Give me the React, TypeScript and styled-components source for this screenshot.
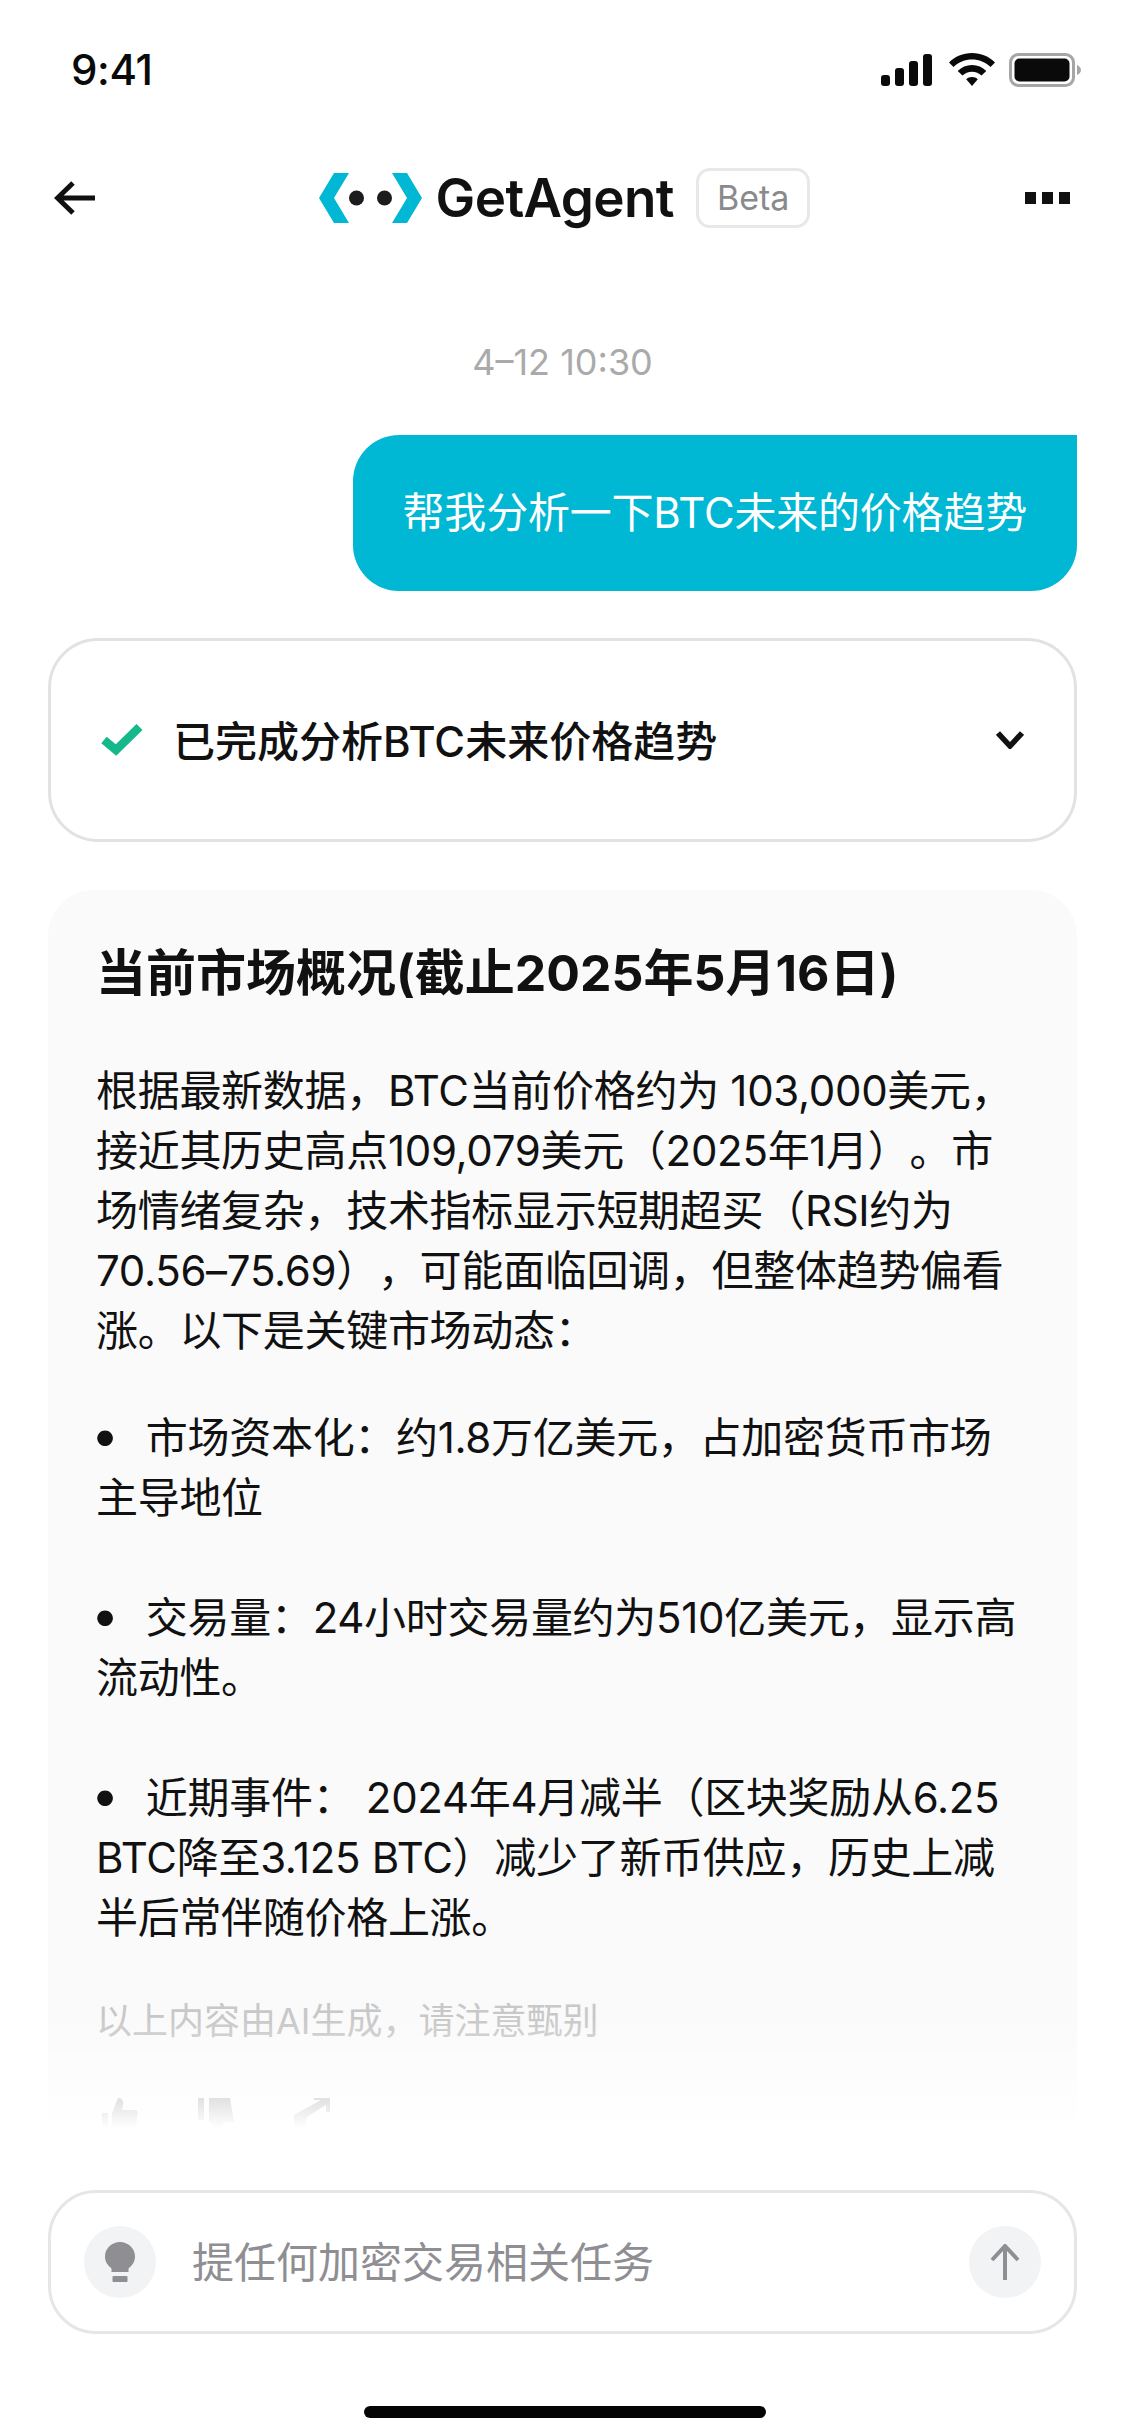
import React from "react";
import styled, { createGlobalStyle } from "styled-components";

const Global = createGlobalStyle`
  html, body { margin: 0; padding: 0; background: #fff; }
  body {
    font-family: "Inter", "Noto Sans CJK SC", sans-serif;
    text-spacing-trim: space-all;
  }
`;

const Screen = styled.div`
  width: 1125px;
  height: 2436px;
  background: #fff;
  display: flex;
  flex-direction: column;
  overflow: hidden;
  position: relative;
`;

const StatusBar = styled.div`
  height: 140px;
  padding: 0 44px 0 71px;
  box-sizing: border-box;
  display: flex;
  align-items: center;
  justify-content: space-between;
  color: #0a0a0a;
`;

const Time = styled.span`
  font-size: 42px;
  font-weight: 500;
  letter-spacing: -0.4px;
  padding-bottom: 2px;
`;

const StatusIcons = styled.div`
  display: flex;
  align-items: center;
  gap: 14px;
`;

const NavBar = styled.div`
  height: 116px;
  padding: 0 54px;
  display: flex;
  align-items: center;
  justify-content: space-between;
`;

const Brand = styled.div`
  display: flex;
  align-items: center;
  margin-left: 8px;
`;

const BrandName = styled.span`
  font-size: 53px;
  font-weight: 600;
  letter-spacing: -0.6px;
  color: #111;
  margin-left: 13px;
`;

const BetaTag = styled.span`
  margin-left: 22px;
  font-size: 34px;
  line-height: 42px;
  color: #8a8a8e;
  border: 3px solid #e8e8e8;
  border-radius: 14px;
  padding: 6px 18px;
`;

const Stamp = styled.div`
  margin-top: 84px;
  text-align: center;
  font-size: 36px;
  color: #aaa;
  line-height: 44px;
`;

const UserRow = styled.div`
  display: flex;
  justify-content: flex-end;
  padding: 0 48px;
  margin-top: 51px;
`;

const UserBubble = styled.div`
  height: 156px;
  box-sizing: border-box;
  padding: 0 50px 8px;
  display: flex;
  align-items: center;
  background: #00b8d4;
  color: #fff;
  font-size: 42px;
  letter-spacing: -0.2px;
  border-radius: 46px 0 46px 46px;
`;

const TaskCard = styled.div`
  margin: 47px 48px 0;
  height: 204px;
  box-sizing: border-box;
  border: 3px solid #e2e2e2;
  border-radius: 50px;
  display: flex;
  align-items: center;
  padding: 0 50px;
  gap: 30px;
  font-size: 42px;
  font-weight: 500;
  color: #111;
`;

const TaskTitle = styled.span`
  flex: 1;
  padding-bottom: 3px;
`;

const Answer = styled.div`
  margin: 48px 48px 0;
  height: 1238px;
  padding: 53px 48px 0;
  box-sizing: border-box;
  border-radius: 46px 46px 0 0;
  background: #fafafb;
  position: relative;
  overflow: hidden;
  color: #111;
  font-size: 42px;
  line-height: 60px;
  letter-spacing: -0.3px;
`;

const AnswerTitle = styled.div`
  font-size: 50px;
  font-weight: 700;
  line-height: 60px;
  letter-spacing: 0;
  margin-bottom: 58px;
`;

const Para = styled.p<{ $gap: number }>`
  margin: 0 0 ${(p) => p.$gap}px;
`;

const BulletPara = styled(Para)`
  &::before {
    content: "•";
    font-size: 50px;
    line-height: 0;
    margin: 0 27px 0 -5px;
  }
`;

const Disclaimer = styled.div`
  font-size: 36px;
  line-height: 44px;
  letter-spacing: 0;
  color: #c8c8c8;
  margin-top: -9px;
`;

const Actions = styled.div`
  display: flex;
  gap: 60px;
  margin: 55px 0 0 6px;
  color: #8e8e93;
`;

const Fade = styled.div`
  position: absolute;
  left: 0;
  right: 0;
  bottom: 0;
  height: 110px;
  background: linear-gradient(to bottom, rgba(255, 255, 255, 0), #fff);
`;

const Composer = styled.div`
  position: absolute;
  left: 48px;
  right: 48px;
  top: 2190px;
  height: 144px;
  box-sizing: border-box;
  border: 3px solid #e6e6e6;
  border-radius: 48px;
  display: flex;
  align-items: center;
  padding: 0 33px;
  gap: 36px;
  background: #fff;
`;

const RoundButton = styled.div`
  width: 72px;
  height: 72px;
  border-radius: 50%;
  background: #f2f3f5;
  display: flex;
  align-items: center;
  justify-content: center;
  flex: none;
`;

const Placeholder = styled.span`
  flex: 1;
  font-size: 42px;
  color: #8e8e93;
  padding-bottom: 5px;
`;

const HomeBar = styled.div`
  position: absolute;
  left: 364px;
  top: 2406px;
  width: 402px;
  height: 12px;
  border-radius: 6px;
  background: #050505;
`;

const Logo = () => (
  <svg width="104" height="50" viewBox="0 0 104 50">
    <path d="M0 25 L15 0 H30 L15 25 L30 50 H15Z M103 25 L88 0 H73 L88 25 L73 50 H88Z" fill="#00b8d4" />
    <circle cx="37.500" cy="25" r="7.500" fill="#1c1c1e" />
    <circle cx="65.500" cy="25" r="7.500" fill="#1c1c1e" />
  </svg>
);

const Icons = {
  Signal: () => (
    <svg width="54" height="32" viewBox="0 0 54 32" fill="#0a0a0a">
      <rect x="0" y="21" width="9" height="11" rx="3" />
      <rect x="14" y="14" width="9" height="18" rx="3" />
      <rect x="28" y="7" width="9" height="25" rx="3" />
      <rect x="42" y="0" width="9" height="32" rx="3" />
    </svg>
  ),
  Wifi: () => (
    <svg width="46" height="34" viewBox="0 0 46 34" fill="#0a0a0a">
      <path d="M23 0C14 0 6 3.500 0 9.500L4.500 14C9.500 9 16 6.500 23 6.500S36.500 9 41.500 14L46 9.500C40 3.500 32 0 23 0Z" />
      <path d="M23 12C17.500 12 12.500 14.200 8.700 18L13.500 22.500C16 20 19.300 18.700 23 18.700S30 20 32.500 22.500L37.300 18C33.500 14.200 28.500 12 23 12Z" />
      <path d="M23 24C20.700 24 18.700 24.800 17.200 26.300L23 33L28.800 26.300C27.300 24.800 25.300 24 23 24Z" />
    </svg>
  ),
  Battery: () => (
    <svg width="72" height="34" viewBox="0 0 72 34">
      <rect x="1.500" y="1.500" width="63" height="31" rx="8" fill="none" stroke="#a6a6a6" strokeWidth="3" />
      <rect x="5.500" y="5.500" width="55" height="23" rx="5" fill="#0a0a0a" />
      <path d="M68 12C70.500 13 72 15 72 17S70.500 21 68 22Z" fill="#a6a6a6" />
    </svg>
  ),
  Back: () => (
    <svg width="42" height="34" viewBox="0 0 42 34" fill="none" stroke="#111" strokeWidth="5">
      <path d="M41 17H4M19 2L3.500 17L19 32" />
    </svg>
  ),
  More: () => (
    <svg width="46" height="12" viewBox="0 0 46 12" fill="#111">
      <rect x="0" y="0" width="11" height="12" />
      <rect x="17" y="0" width="11" height="12" />
      <rect x="34" y="0" width="11" height="12" />
    </svg>
  ),
  Check: () => (
    <svg width="42" height="32" viewBox="0 0 42 32" fill="none" stroke="#14b88a" strokeWidth="8.500">
      <path d="M3 16L15 26L38.500 3" />
    </svg>
  ),
  Chevron: () => (
    <svg width="28" height="18" viewBox="0 0 28 18" fill="none" stroke="#111" strokeWidth="5.500">
      <path d="M2 2L14 15L26 2" />
    </svg>
  ),
  Bulb: () => (
    <svg width="30" height="40" viewBox="0 0 30 40" fill="#8e8e93">
      <path d="M15 0C6.700 0 0 6.500 0 14.500C0 20 3 23.500 6.500 26.500V30H23.500V26.500C27 23.500 30 20 30 14.500C30 6.500 23.300 0 15 0Z" />
      <rect x="7.500" y="34" width="15" height="6" rx="1" />
    </svg>
  ),
  Up: () => (
    <svg width="30" height="36" viewBox="0 0 30 36" fill="none" stroke="#8e8e93" strokeWidth="4">
      <path d="M15 36V3M2 16L15 2L28 16" />
    </svg>
  ),
  Thumb: () => (
    <svg width="36" height="36" viewBox="0 0 36 36" fill="currentColor">
      <path d="M0 15H6V36H0Z M10 15L16 0C20 0 22 3 21 7L20 12H33C35.500 12 36 14 35.500 16L33 36H10Z" />
    </svg>
  ),
  ThumbDown: () => (
    <svg width="36" height="36" viewBox="0 0 36 36" fill="currentColor">
      <path d="M0 0H6V22H0Z M11 0H32L36 24H26L22 36H16L13 24H11Z" />
    </svg>
  ),
  Share: () => (
    <svg width="36" height="36" viewBox="0 0 36 36" fill="currentColor">
      <path d="M20 0H36V14H32V7L13 19L11 30L4 36H0V17L9 12L27 2H20Z" />
    </svg>
  ),
};

export default function App() {
  return (
    <Screen>
      <Global />
      <StatusBar>
        <Time>9:41</Time>
        <StatusIcons>
          <Icons.Signal />
          <Icons.Wifi />
          <Icons.Battery />
        </StatusIcons>
      </StatusBar>
      <NavBar>
        <Icons.Back />
        <Brand>
          <Logo />
          <BrandName>GetAgent</BrandName>
          <BetaTag>Beta</BetaTag>
        </Brand>
        <Icons.More />
      </NavBar>
      <Stamp>4–12 10:30</Stamp>
      <UserRow>
        <UserBubble>帮我分析一下BTC未来的价格趋势</UserBubble>
      </UserRow>
      <TaskCard>
        <Icons.Check />
        <TaskTitle>已完成分析BTC未来价格趋势</TaskTitle>
        <Icons.Chevron />
      </TaskCard>
      <Answer>
        <AnswerTitle>当前市场概况(截止2025年5月16日)</AnswerTitle>
        <Para $gap={47}>
          根据最新数据，BTC当前价格约为 103,000美元，接近其历史高点109,079美元（2025年1月）。市场情绪复杂，技术指标显示短期超买（RSI约为70.56–75.69），可能面临回调，但整体趋势偏看涨。以下是关键市场动态：
        </Para>
        <BulletPara $gap={60}>市场资本化：约1.8万亿美元，占加密货币市场主导地位</BulletPara>
        <BulletPara $gap={60}>交易量：24小时交易量约为510亿美元，显示高流动性。</BulletPara>
        <BulletPara $gap={60}>近期事件： 2024年4月减半（区块奖励从6.25 BTC降至3.125 BTC）减少了新币供应，历史上减半后常伴随价格上涨。</BulletPara>
        <Disclaimer>以上内容由AI生成，请注意甄别</Disclaimer>
        <Actions>
          <Icons.Thumb />
          <Icons.ThumbDown />
          <Icons.Share />
        </Actions>
        <Fade />
      </Answer>
      <Composer>
        <RoundButton>
          <Icons.Bulb />
        </RoundButton>
        <Placeholder>提任何加密交易相关任务</Placeholder>
        <RoundButton>
          <Icons.Up />
        </RoundButton>
      </Composer>
      <HomeBar />
    </Screen>
  );
}
